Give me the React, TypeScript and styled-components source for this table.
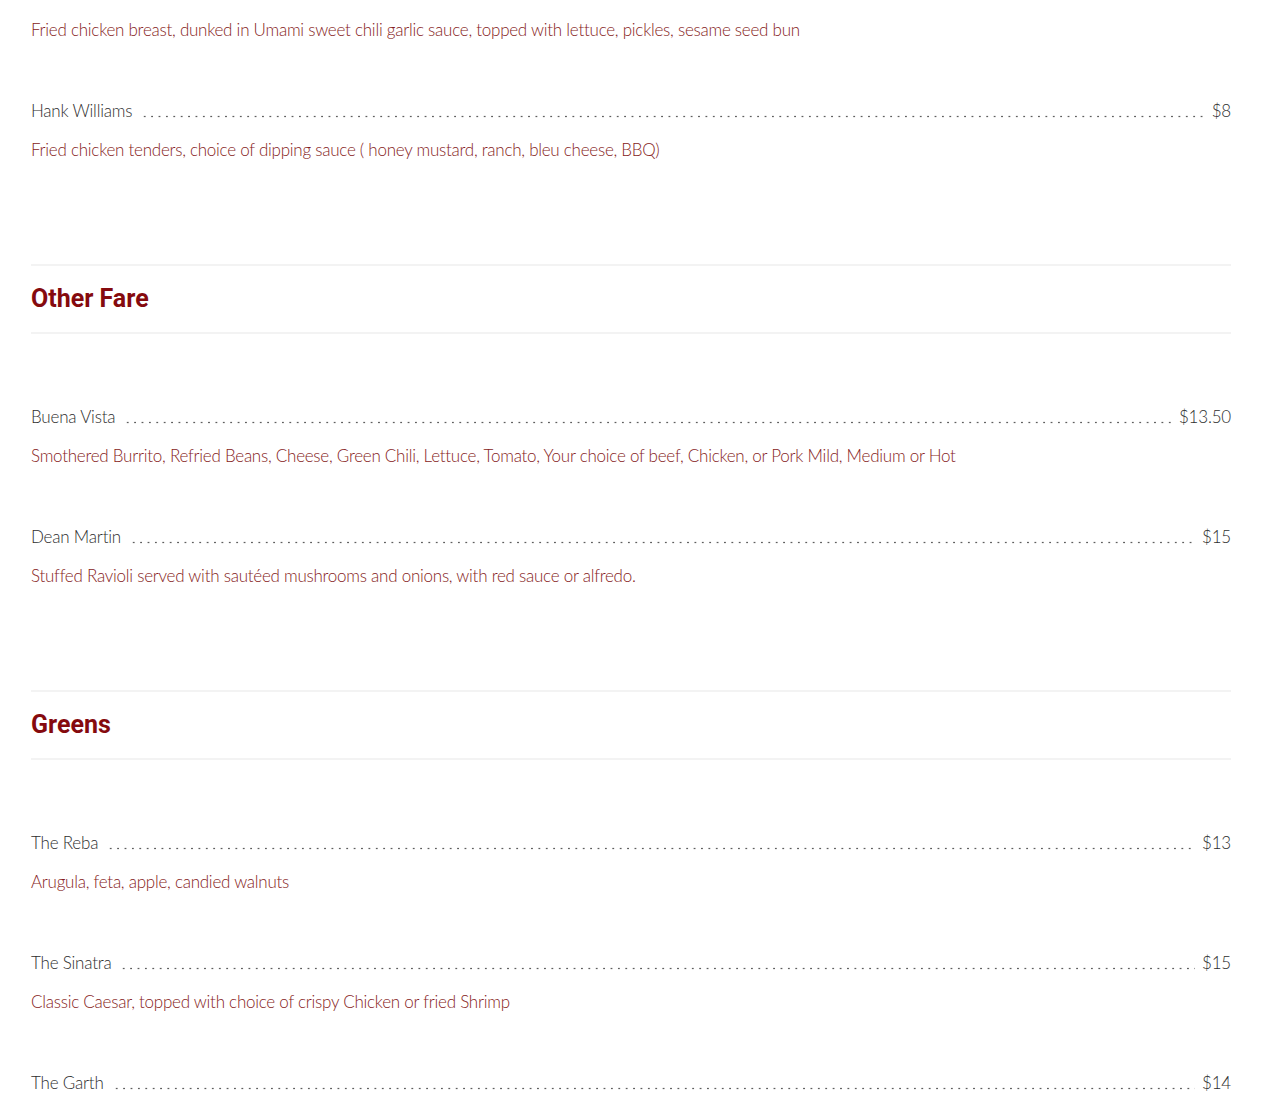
import React from 'react';
import styled, { createGlobalStyle } from 'styled-components';

const GlobalStyle = createGlobalStyle`
  body {
    margin: 0;
    background: #ffffff;
    font-family: 'Lato', 'Open Sans', sans-serif;
  }
`;

const Page = styled.div`
  width: 1200px;
  margin-left: 31px;
  padding-top: 16px;
`;

const Section = styled.section`
  display: flex;
  flex-direction: column;
`;

const SectionHeader = styled.div`
  margin-top: 100px;
  margin-bottom: 69px;
  border-top: 2px solid #f3f3f3;
  border-bottom: 2px solid #f3f3f3;
  height: 66px;
  display: flex;
  align-items: center;
`;

const SectionTitle = styled.h2`
  margin: -2px 0 0;
  font-family: 'Roboto', 'Liberation Sans', sans-serif;
  font-weight: 700;
  font-size: 25px;
  color: #850a0e;
`;

const Item = styled.div<{ $first?: boolean }>`
  display: flex;
  flex-direction: column;
  margin-top: ${p => (p.$first ? '0' : '53px')};
`;

const ItemRow = styled.div`
  display: flex;
  align-items: baseline;
  height: 28px;
  line-height: 28px;
  font-size: 17px;
  font-weight: 300;
  letter-spacing: -0.2px;
  color: #2e2e2e;
`;

const Leader = styled.span`
  flex: 1;
  align-self: stretch;
  margin: 0 7px 0 9px;
  background-image: radial-gradient(circle, #5e5e5e 0.75px, transparent 1.15px);
  background-size: 7.4px 3px;
  background-repeat: repeat-x;
  background-position: left 18px;
`;

const Description = styled.p<{ $lead?: boolean }>`
  margin: ${p => (p.$lead ? '0' : '11px')} 0 0;
  font-size: 17px;
  font-weight: 300;
  letter-spacing: -0.25px;
  line-height: 28px;
  color: #861c22;
`;

type MenuItem = { name: string; price?: string; desc?: string };

const MenuEntry: React.FC<{ item: MenuItem; first?: boolean }> = ({ item, first }) => (
  <Item $first={first}>
    {item.price && (
      <ItemRow>
        <span>{item.name}</span>
        <Leader />
        <span>{item.price}</span>
      </ItemRow>
    )}
    {item.desc && <Description>{item.desc}</Description>}
  </Item>
);

const otherFare: MenuItem[] = [
  {
    name: 'Buena Vista',
    price: '$13.50',
    desc: 'Smothered Burrito, Refried Beans, Cheese, Green Chili, Lettuce, Tomato, Your choice of beef, Chicken, or Pork Mild, Medium or Hot',
  },
  {
    name: 'Dean Martin',
    price: '$15',
    desc: 'Stuffed Ravioli served with sautéed mushrooms and onions, with red sauce or alfredo.',
  },
];

const greens: MenuItem[] = [
  { name: 'The Reba', price: '$13', desc: 'Arugula, feta, apple, candied walnuts' },
  {
    name: 'The Sinatra',
    price: '$15',
    desc: 'Classic Caesar, topped with choice of crispy Chicken or fried Shrimp',
  },
  { name: 'The Garth', price: '$14' },
];

export default function App() {
  return (
    <>
      <GlobalStyle />
      <Page>
        <Section>
          <Description $lead>
            Fried chicken breast, dunked in Umami sweet chili garlic sauce, topped with lettuce, pickles, sesame seed bun
          </Description>
          <MenuEntry
            item={{
              name: 'Hank Williams',
              price: '$8',
              desc: 'Fried chicken tenders, choice of dipping sauce ( honey mustard, ranch, bleu cheese, BBQ)',
            }}
          />
        </Section>
        <Section>
          <SectionHeader>
            <SectionTitle>Other Fare</SectionTitle>
          </SectionHeader>
          {otherFare.map((item, i) => (
            <MenuEntry key={item.name} item={item} first={i === 0} />
          ))}
        </Section>
        <Section>
          <SectionHeader>
            <SectionTitle>Greens</SectionTitle>
          </SectionHeader>
          {greens.map((item, i) => (
            <MenuEntry key={item.name} item={item} first={i === 0} />
          ))}
        </Section>
      </Page>
    </>
  );
}
